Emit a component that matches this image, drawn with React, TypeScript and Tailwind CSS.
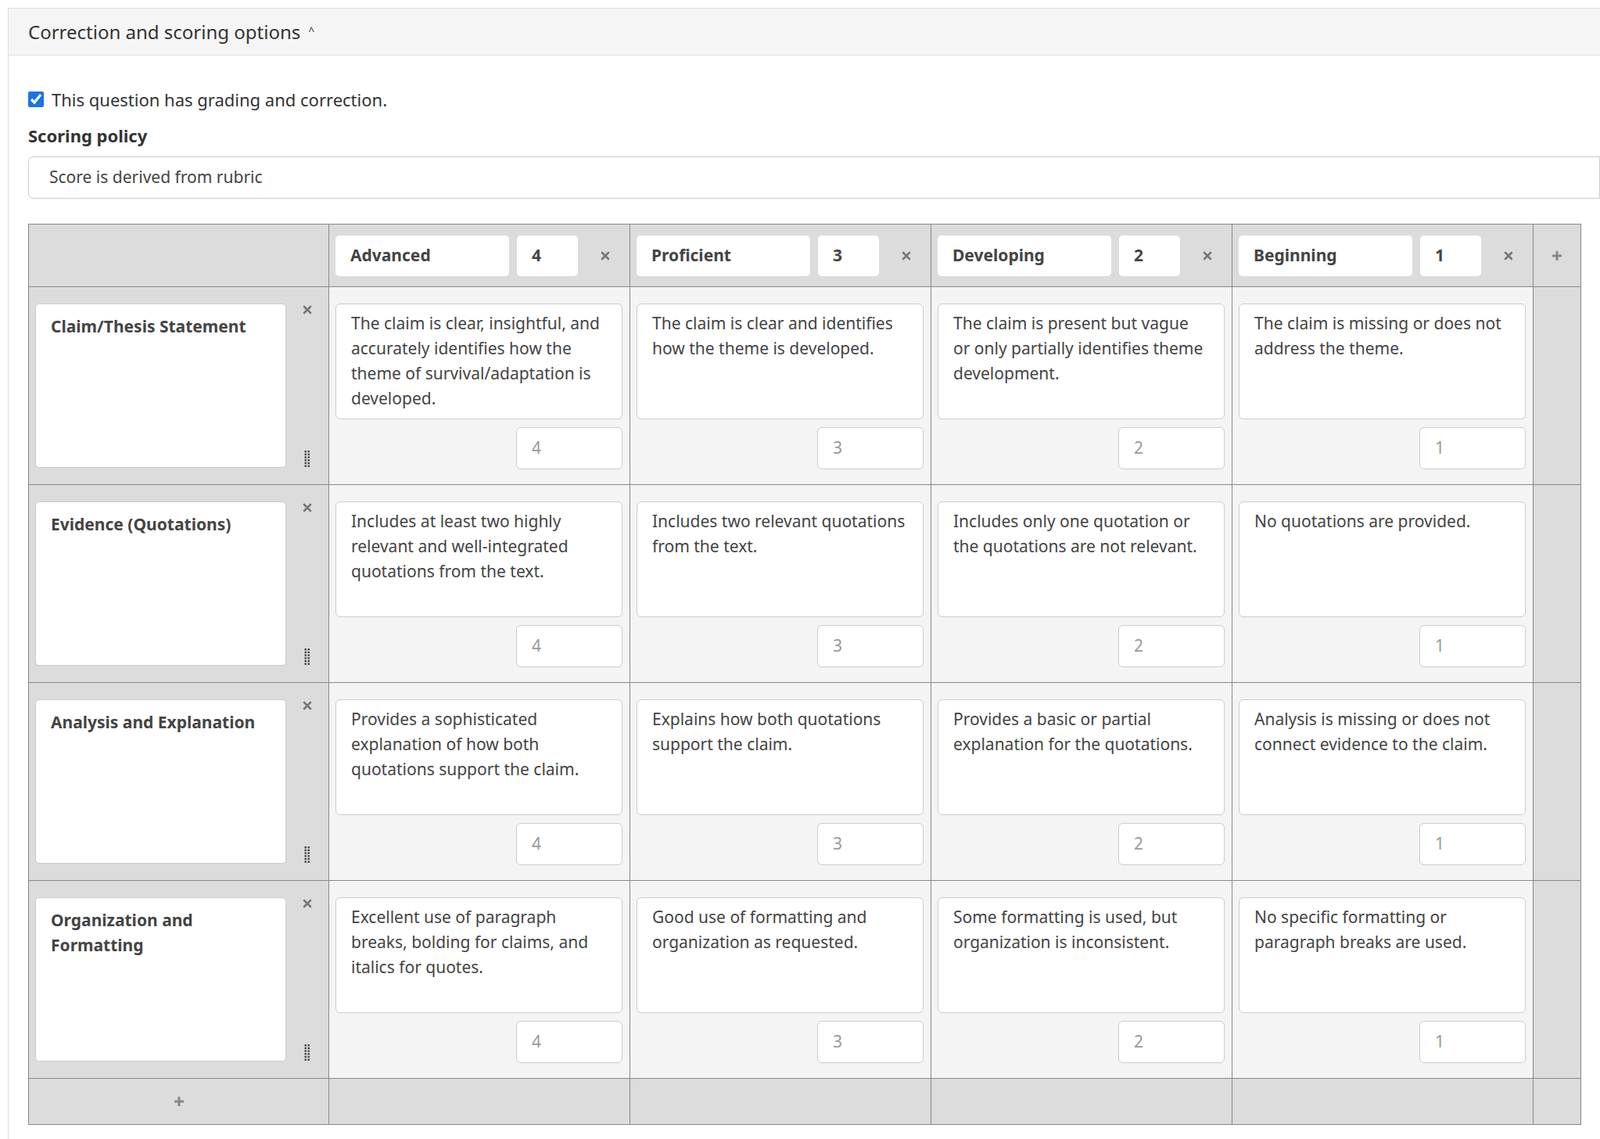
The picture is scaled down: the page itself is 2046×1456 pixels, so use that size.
import { useState } from "react";

const levels = [
  { name: "Advanced", pts: "4" },
  { name: "Proficient", pts: "3" },
  { name: "Developing", pts: "2" },
  { name: "Beginning", pts: "1" },
];

const rows = [
  {
    title: "Claim/Thesis Statement",
    cells: [
      "The claim is clear, insightful, and accurately identifies how the theme of survival/adaptation is developed.",
      "The claim is clear and identifies how the theme is developed.",
      "The claim is present but vague or only partially identifies theme development.",
      "The claim is missing or does not address the theme.",
    ],
  },
  {
    title: "Evidence (Quotations)",
    cells: [
      "Includes at least two highly relevant and well-integrated quotations from the text.",
      "Includes two relevant quotations from the text.",
      "Includes only one quotation or the quotations are not relevant.",
      "No quotations are provided.",
    ],
  },
  {
    title: "Analysis and Explanation",
    cells: [
      "Provides a sophisticated explanation of how both quotations support the claim.",
      "Explains how both quotations support the claim.",
      "Provides a basic or partial explanation for the quotations.",
      "Analysis is missing or does not connect evidence to the claim.",
    ],
  },
  {
    title: "Organization and Formatting",
    cells: [
      "Excellent use of paragraph breaks, bolding for claims, and italics for quotes.",
      "Good use of formatting and organization as requested.",
      "Some formatting is used, but organization is inconsistent.",
      "No specific formatting or paragraph breaks are used.",
    ],
  },
];

const cols = "grid grid-cols-[384px_385px_385px_385px_385px_1fr]";

function X() {
  return (
    <svg width="12" height="12" viewBox="0 0 12 12">
      <path d="M2 2L10 10M10 2L2 10" stroke="#777" strokeWidth="2.6" strokeLinecap="round" />
    </svg>
  );
}

function Plus() {
  return (
    <svg width="14" height="14" viewBox="0 0 14 14">
      <path d="M7 1V13M1 7H13" stroke="#888" strokeWidth="3" />
    </svg>
  );
}

function Grip() {
  return (
    <svg width="8" height="22" viewBox="0 0 8 22">
      {[0, 1, 2, 3, 4, 5].map((i) => (
        <g key={i} fill="#444">
          <rect x="0.5" y={i * 3.7} width="2.4" height="2.4" />
          <rect x="4.5" y={i * 3.7} width="2.4" height="2.4" />
        </g>
      ))}
    </svg>
  );
}

export default function App() {
  const [checked, setChecked] = useState(true);
  return (
    <div className="w-[2046px] h-[1456px] bg-white overflow-hidden pl-[10px] pt-[10px] font-['Lato','Open_Sans',sans-serif] text-[#333]">
      <div className="border border-[#ddd] border-r-0 h-[1480px]">
        <div className="h-[60px] bg-[#f5f5f5] border-b border-[#ddd] flex items-center pl-[25px] text-[24px] text-[#333]">
          Correction and scoring options
          <span className="ml-[10px] text-[14px] mt-[-2px]">^</span>
        </div>
        <div className="pl-[25px] pt-[38px]">
          <label className="flex items-center gap-[10px] text-[22px] h-[36px]">
            <input
              type="checkbox"
              checked={checked}
              onChange={() => setChecked(!checked)}
              className="w-[20px] h-[20px] accent-[#1a73e8]"
            />
            This question has grading and correction.
          </label>
          <div className="mt-[12px] text-[22px] font-bold text-[#333]">Scoring policy</div>
          <div className="mt-[10px] h-[54px] border border-[#ccc] rounded-l-[6px] flex items-center pl-[26px] text-[21px] text-[#444]">
            Score is derived from rubric
          </div>

          <div className="mt-[32px] w-[1986px] border border-[#888] text-[21px] text-[#444]">
            <div className={`${cols} bg-[#dcdcdc] h-[80px] border-b border-[#888]`}>
              <div className="border-r border-[#888]" />
              {levels.map((l) => (
                <div key={l.name} className="border-r border-[#888] flex items-center pl-[8px] gap-[10px]">
                  <div className="w-[222px] h-[52px] bg-white rounded-[5px] flex items-center pl-[19px] font-bold text-[#444]">
                    {l.name}
                  </div>
                  <div className="w-[78px] h-[52px] bg-white rounded-[5px] flex items-center pl-[19px] font-bold text-[#444]">
                    {l.pts}
                  </div>
                  <div className="w-[50px] flex justify-center"><X /></div>
                </div>
              ))}
              <div className="flex items-center justify-center"><Plus /></div>
            </div>

            {rows.map((r) => (
              <div key={r.title} className={`${cols} h-[253px] border-b border-[#888]`}>
                <div className="bg-[#dcdcdc] border-r border-[#888] flex pl-[8px] pt-[21px]">
                  <div className="w-[321px] h-[210px] bg-white rounded-[5px] border border-[#ccc] px-[19px] pt-[12px] font-bold text-[#444] leading-[32px]">
                    {r.title}
                  </div>
                  <div className="flex-1 flex flex-col items-center justify-between pt-[2px] pb-[4px] h-[214px]">
                    <X />
                    <Grip />
                  </div>
                </div>
                {r.cells.map((c, i) => (
                  <div key={i} className="bg-[#f4f4f4] border-r border-[#888] pl-[8px] pr-[9px] pt-[21px] flex flex-col items-end gap-[10px]">
                    <div className="w-full h-[148px] bg-white rounded-[6px] border border-[#ccc] px-[19px] pt-[8px] leading-[32px]">
                      {c}
                    </div>
                    <div className="w-[136px] h-[54px] bg-white rounded-[6px] border border-[#ccc] flex items-center pl-[19px] text-[#999]">
                      {levels[i].pts}
                    </div>
                  </div>
                ))}
                <div className="bg-[#dcdcdc]" />
              </div>
            ))}

            <div className={`${cols} h-[58px] bg-[#dcdcdc]`}>
              <div className="border-r border-[#888] flex items-center justify-center"><Plus /></div>
              <div className="border-r border-[#888]" />
              <div className="border-r border-[#888]" />
              <div className="border-r border-[#888]" />
              <div className="border-r border-[#888]" />
              <div />
            </div>
          </div>
        </div>
      </div>
    </div>
  );
}
